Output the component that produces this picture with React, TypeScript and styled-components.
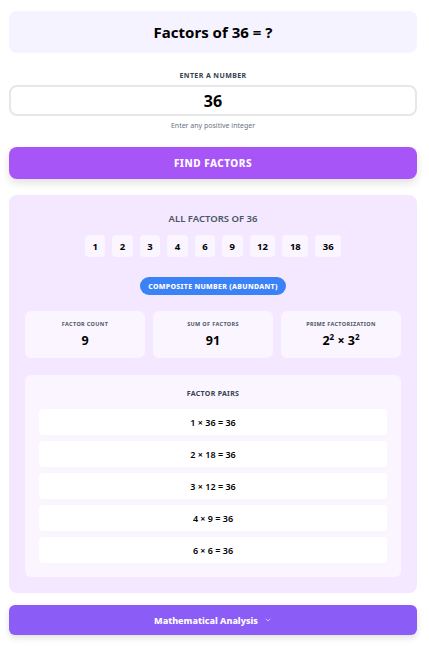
import React from "react";
import styled, { createGlobalStyle } from "styled-components";

const Global = createGlobalStyle`
  html, body { margin: 0; padding: 0; background: #ffffff; }
  body { font-family: "Noto Sans", "Open Sans", sans-serif; color: #111827; }
`;

const Page = styled.div`
  display: flex;
  flex-direction: column;
  padding: 11px 12px 11px 9px;
`;

const TitleCard = styled.div`
  height: 42px;
  background: #f5f3ff;
  border-radius: 8px;
  display: flex;
  align-items: center;
  justify-content: center;
  font-size: 15px;
  font-weight: 700;
  color: #000;
`;

const Label = styled.div`
  margin-top: 18px;
  text-align: center;
  font-size: 7px;
  font-weight: 700;
  letter-spacing: 0.4px;
  color: #374151;
  line-height: 10px;
`;

const Input = styled.input`
  margin-top: 4px;
  height: 31px;
  box-sizing: border-box;
  border: 2px solid #e5e7eb;
  border-radius: 8px;
  text-align: center;
  font-family: inherit;
  font-size: 16px;
  font-weight: 700;
  color: #000;
  outline: none;
`;

const Helper = styled.div`
  margin-top: 5px;
  text-align: center;
  font-size: 7px;
  color: #6b7280;
  line-height: 10px;
`;

const FindButton = styled.button`
  margin-top: 16px;
  height: 32px;
  border: none;
  border-radius: 8px;
  background: #a855f7;
  color: #fff;
  font-family: inherit;
  font-size: 10px;
  font-weight: 800;
  letter-spacing: 0.5px;
  box-shadow: 0 4px 8px rgba(0, 0, 0, 0.12);
`;

const Results = styled.div`
  margin-top: 16px;
  background: #f3e8ff;
  border-radius: 8px;
  padding: 17px 16px 16px;
  display: flex;
  flex-direction: column;
  align-items: stretch;
`;

const SectionTitle = styled.div`
  text-align: center;
  font-size: 9.5px;
  font-weight: 600;
  color: #4b5563;
  line-height: 14px;
`;

const Chips = styled.div`
  margin-top: 9px;
  display: flex;
  justify-content: center;
  gap: 7px;
`;

const Chip = styled.div`
  padding: 0 7.5px;
  height: 22px;
  background: #faf5ff;
  border-radius: 4px;
  display: flex;
  align-items: center;
  justify-content: center;
  font-size: 9.5px;
  font-weight: 700;
  color: #000;
`;

const BadgeRow = styled.div`
  margin-top: 20px;
  display: flex;
  justify-content: center;
`;

const Badge = styled.div`
  height: 18px;
  padding: 0 8px;
  border-radius: 9px;
  background: #3b82f6;
  color: #fff;
  font-size: 7px;
  font-weight: 800;
  letter-spacing: 0.3px;
  display: flex;
  align-items: center;
`;

const Stats = styled.div`
  margin-top: 16px;
  display: grid;
  grid-template-columns: repeat(3, 1fr);
  gap: 8px;
`;

const StatCard = styled.div`
  height: 47px;
  background: #faf5ff;
  border-radius: 6px;
  display: flex;
  flex-direction: column;
  align-items: center;
  justify-content: center;
  gap: 5px;
`;

const StatLabel = styled.div`
  font-size: 5.5px;
  font-weight: 700;
  color: #4b5563;
  letter-spacing: 0.35px;
`;

const StatValue = styled.div`
  font-size: 12.5px;
  font-weight: 700;
  color: #000;
  line-height: 16px;
  sup { font-size: 8px; line-height: 0; }
`;

const Pairs = styled.div`
  margin-top: 17px;
  background: #faf5ff;
  border-radius: 6px;
  padding: 14px;
  display: flex;
  flex-direction: column;
  gap: 6px;
`;

const PairsTitle = styled.div`
  text-align: center;
  font-size: 7px;
  font-weight: 700;
  color: #374151;
  letter-spacing: 0.3px;
  line-height: 10px;
  margin-bottom: 4px;
`;

const PairRow = styled.div`
  height: 26px;
  background: #ffffff;
  border-radius: 4px;
  display: flex;
  align-items: center;
  justify-content: center;
  font-size: 9px;
  font-weight: 600;
  color: #000;
`;

const AnalysisButton = styled.button`
  margin-top: 12px;
  height: 30px;
  border: none;
  border-radius: 6px;
  background: #8b5cf6;
  color: #fff;
  font-family: inherit;
  font-size: 9px;
  font-weight: 800;
  display: flex;
  align-items: center;
  justify-content: center;
  gap: 6px;
  box-shadow: 0 3px 6px rgba(0, 0, 0, 0.12);
`;

const factors = [1, 2, 3, 4, 6, 9, 12, 18, 36];
const pairs = ["1 × 36 = 36", "2 × 18 = 36", "3 × 12 = 36", "4 × 9 = 36", "6 × 6 = 36"];

export default function App() {
  return (
    <Page>
      <Global />
      <TitleCard>Factors of 36 = ?</TitleCard>
      <Label>ENTER A NUMBER</Label>
      <Input value="36" readOnly />
      <Helper>Enter any positive integer</Helper>
      <FindButton>FIND FACTORS</FindButton>
      <Results>
        <SectionTitle>ALL FACTORS OF 36</SectionTitle>
        <Chips>
          {factors.map((f) => (
            <Chip key={f}>{f}</Chip>
          ))}
        </Chips>
        <BadgeRow>
          <Badge>COMPOSITE NUMBER (ABUNDANT)</Badge>
        </BadgeRow>
        <Stats>
          <StatCard>
            <StatLabel>FACTOR COUNT</StatLabel>
            <StatValue>9</StatValue>
          </StatCard>
          <StatCard>
            <StatLabel>SUM OF FACTORS</StatLabel>
            <StatValue>91</StatValue>
          </StatCard>
          <StatCard>
            <StatLabel>PRIME FACTORIZATION</StatLabel>
            <StatValue>
              2<sup>2</sup> × 3<sup>2</sup>
            </StatValue>
          </StatCard>
        </Stats>
        <Pairs>
          <PairsTitle>FACTOR PAIRS</PairsTitle>
          {pairs.map((p) => (
            <PairRow key={p}>{p}</PairRow>
          ))}
        </Pairs>
      </Results>
      <AnalysisButton>
        Mathematical Analysis
        <svg width="8" height="8" viewBox="0 0 24 24" fill="none" stroke="#ddd6fe" strokeWidth="2.5" strokeLinecap="round" strokeLinejoin="round">
          <path d="m6 9 6 6 6-6" />
        </svg>
      </AnalysisButton>
    </Page>
  );
}
